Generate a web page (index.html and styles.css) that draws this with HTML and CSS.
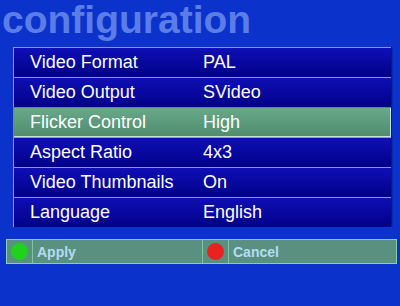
FILE: index.html
```html
<!DOCTYPE html>
<html lang="en">
<head>
  <meta charset="UTF-8" />
  <meta name="viewport" content="width=device-width, initial-scale=1.0" />
  <title>Configuration</title>
  <link rel="stylesheet" href="styles.css">
</head>
<body>

  <h1 class="title">configuration</h1>

  <!-- Settings list -->
  <ul class="settings">
    <li class="row"><span class="label">Video Format</span><span class="value">PAL</span></li>
    <li class="row"><span class="label">Video Output</span><span class="value">SVideo</span></li>
    <li class="row selected"><span class="label">Flicker Control</span><span class="value">High</span></li>
    <li class="row"><span class="label">Aspect Ratio</span><span class="value">4x3</span></li>
    <li class="row"><span class="label">Video Thumbnails</span><span class="value">On</span></li>
    <li class="row"><span class="label">Language</span><span class="value">English</span></li>
  </ul>

  <!-- Button bar -->
  <div class="actions">
    <div class="action">
      <span class="dot-cell"><span class="dot green"></span></span>
      <span class="action-label">Apply</span>
    </div>
    <div class="action">
      <span class="dot-cell"><span class="dot red"></span></span>
      <span class="action-label">Cancel</span>
    </div>
  </div>

</body>
</html>
```

FILE: styles.css
```css
body {
  margin: 0;
  width: 400px;
  height: 306px;
  background: #0b33cc;
  font-family: 'Liberation Sans', Arial, sans-serif;
  overflow: hidden;
}

.title {
  margin: 0;
  padding: 0 0 7px 2px;
  font-size: 39px;
  line-height: 40px;
  font-weight: bold;
  color: #5c7de6;
}

.settings {
  list-style: none;
  margin: 0 0 0 13px;
  padding: 0;
  width: 378px;
}

.row {
  display: grid;
  grid-template-columns: 173px 1fr;
  height: 30px;
  box-sizing: border-box;
  padding-left: 16px;
  font-size: 18px;
  line-height: 29px;
  color: #ffffff;
  background: linear-gradient(#0f0fb6, #000088);
  border-top: 1px solid #8e8ef4;
  border-left: 1px solid #8e8ef4;
  box-shadow: 1px 0 0 #061a80, 2px 0 0 #0a2aa8;
}

.row.selected {
  background: linear-gradient(#6aa88a, #4f8c6e);
  border-top-color: #4f8c6e;
  border-left-color: #5a9878;
  box-shadow: inset -1px -1px 0 #c8e4d6, 1px 0 0 #061a80;
}

/* Button bar */
.actions {
  display: flex;
  margin: 12px 0 0 6px;
  width: 391px;
  height: 25px;
  box-sizing: border-box;
  border: 1px solid #82d2aa;
  background: #5a9080;
}

.action {
  display: flex;
  align-items: center;
  flex: 0 0 195px;
}

.action + .action {
  flex: 1;
  border-left: 1px solid #7cc6a0;
}

.dot-cell {
  display: flex;
  align-items: center;
  justify-content: center;
  width: 25px;
  height: 100%;
  border-right: 1px solid #7cc6a0;
}

.dot {
  width: 17px;
  height: 17px;
  border-radius: 50%;
}

.green { background: #1ed21e; }
.red { background: #ec2020; }

.action-label {
  padding-left: 4px;
  font-size: 14px;
  font-weight: bold;
  color: #b4dcf2;
}
```
